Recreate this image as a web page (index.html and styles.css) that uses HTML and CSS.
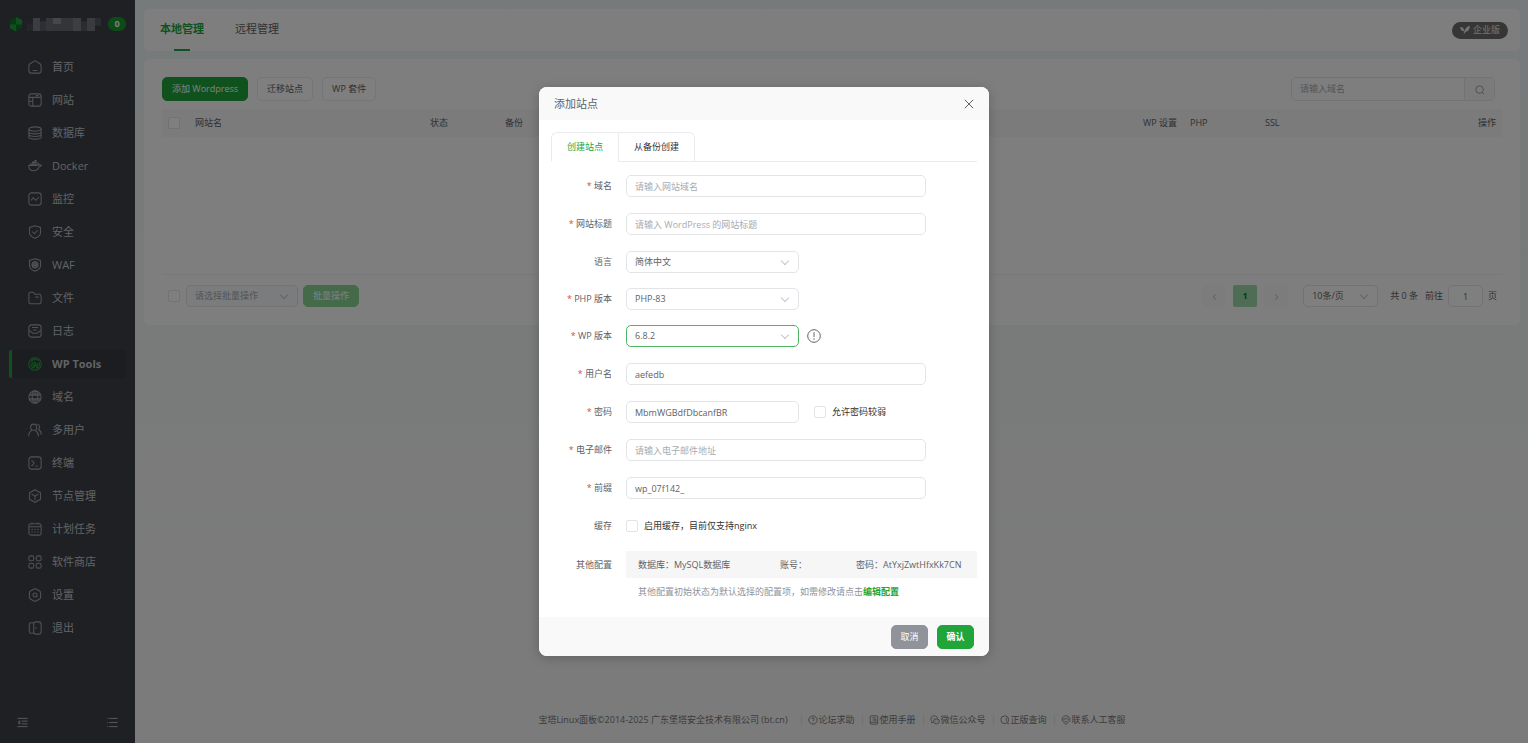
FILE: index.html
```html
<!DOCTYPE html>
<html lang="zh-CN">
<head>
<meta charset="utf-8">
<title>WP Tools</title>
<link rel="stylesheet" href="styles.css">
</head>
<body>
<div class="app">
  <aside class="sidebar">
    <div class="brand">
      <svg class="brand-logo" viewBox="0 0 14 16"><path d="M7 1l6 3v8l-6 3.500L1 12V4z" fill="#12702a"/><path d="M7 1l6 3v4.500H7zM1 8.500h6v7L1 12z" fill="#1fa33a"/></svg>
      <svg class="brand-name" viewBox="0 0 76 12" preserveAspectRatio="none"><path d="M0 5h6v7H0z" fill="#484c55"/><path d="M6 0h7v12H6z" fill="#767a82"/><path d="M13 3h6v9h-6z" fill="#5b5f68"/><path d="M19 0h7v12h-7z" fill="#696d75"/><path d="M26 0h8v6h-8z" fill="#8b8e94"/><path d="M26 6h8v6h-8zM34 0h12v12H34z" fill="#676b73"/><path d="M46 0h8v12h-8z" fill="#797c84"/><path d="M54 3h6v9h-6z" fill="#545861"/><path d="M60 0h8v12h-8z" fill="#73777e"/><path d="M68 0h6v7h-6z" fill="#555962"/></svg>
      <span class="badge">0</span>
    </div>
    <nav class="menu">
      <a href="#" class="item"><svg class="ico" viewBox="0 0 16 16"><path d="M2.300 4.300L7 1.300q1-.6 2 0l4.700 3q1.300.8 1.300 2.200v6q0 2.500-2.500 2.500h-9Q1 15 1 12.500v-6q0-1.400 1.300-2.200zM5.500 12h5"/></svg>首页</a>
      <a href="#" class="item"><svg class="ico" viewBox="0 0 16 16"><rect x="1" y="1" width="14" height="14" rx="2.500"/><path d="M1 5h14M5.500 5v10M5.500 9.500H1M9 3h3"/></svg>网站</a>
      <a href="#" class="item"><svg class="ico" viewBox="0 0 16 16"><ellipse cx="8" cy="3.500" rx="7" ry="2.500"/><path d="M1 3.500v9c0 3.300 14 3.300 14 0v-9M1 6.500c0 3.300 14 3.300 14 0M1 9.500c0 3.300 14 3.300 14 0"/></svg>数据库</a>
      <a href="#" class="item"><svg class="ico" viewBox="0 0 16 16"><path d="M.8 7.500h10.500c.5-1 .3-2 0-2.800 1 .5 1.500 1.300 1.600 2 1-.2 1.800 0 2.500.4-.5 1-1.400 1.400-2.400 1.400-1.200 3.500-3.500 5-6.500 5C2.500 13.500.8 11 .8 7.500z"/><path d="M2 5h2.400v2.500H2zM4.700 5h2.400v2.500H4.700zM7.400 5h2.400v2.500H7.400zM4.700 2.800h2.400v2H4.700zM7.400 1.200h2.400v3.600H7.400z" fill="currentColor" stroke="none"/></svg>Docker</a>
      <a href="#" class="item"><svg class="ico" viewBox="0 0 16 16"><rect x="1" y="1" width="14" height="14" rx="3"/><path d="M3.500 9.500l2.500-3 3 3 3.500-3.500"/></svg>监控</a>
      <a href="#" class="item"><svg class="ico" viewBox="0 0 16 16"><path d="M8 .8l6.300 2v6c0 3.200-3 5-6.300 6.400-3.300-1.400-6.300-3.200-6.300-6.400v-6zM5 7.500L7.500 10 11 6"/></svg>安全</a>
      <a href="#" class="item"><svg class="ico" viewBox="0 0 16 16"><path d="M8 .8l6.300 2v6c0 3.200-3 5-6.300 6.400-3.300-1.400-6.300-3.200-6.300-6.400v-6z"/><circle cx="8" cy="7.800" r="3.500"/><ellipse cx="8" cy="7.800" rx="1.500" ry="3.500"/><path d="M4.500 7h7M4.500 8.700h7"/></svg>WAF</a>
      <a href="#" class="item"><svg class="ico" viewBox="0 0 16 16"><path d="M1 12.500v-9q0-2 2-2h2.500q1 0 1.500.8l1 1.400h5q2 0 2 2v6.800q0 2-2 2H3q-2 0-2-2zM8.500 7H12"/></svg>文件</a>
      <a href="#" class="item"><svg class="ico" viewBox="0 0 16 16"><rect x="1" y="1" width="14" height="14" rx="3"/><path d="M1 7l4.500 3.500h5L15 7M4.500 4h7M6 6.800h4"/></svg>日志</a>
      <a href="#" class="item active"><svg class="ico" viewBox="0 0 16 16"><circle cx="8" cy="8" r="7.200"/><path d="M3.300 5.500A5.300 5.300 0 0 1 12 4.500M2.800 7l2.700 5.800M13 6c.8 2.500-.3 5.500-3 7M4.800 5.500L7 12l1.200-3.800-1-2.700M8 5.500L10 12l1.500-5"/></svg>WP Tools</a>
      <a href="#" class="item"><svg class="ico" viewBox="0 0 16 16"><circle cx="8" cy="8" r="7"/><ellipse cx="8" cy="8" rx="3.200" ry="7"/><path d="M2 4.500h12M2 11.500h12M1 6h14M1 10h14M8 1v5M8 10v5"/></svg>域名</a>
      <a href="#" class="item"><svg class="ico" viewBox="0 0 16 16"><circle cx="6.500" cy="4.800" r="3.500"/><path d="M.8 15c0-3.700 1.700-5.700 4-6.700M12 15c0-3-1-5-3.500-6.500M10.500 1.500c3 .2 3.800 4 1.500 6 2 1.200 3.200 3 3.200 6"/></svg>多用户</a>
      <a href="#" class="item"><svg class="ico" viewBox="0 0 16 16"><rect x="1" y="1" width="14" height="14" rx="3"/><path d="M4 5l3 3-3 3.500M8.500 11.500H11"/></svg>终端</a>
      <a href="#" class="item"><svg class="ico" viewBox="0 0 16 16"><path d="M8 .8l6.300 3.600v7.200L8 15.200l-6.300-3.600V4.400zM4 5.700l4 2.500 4-2.500M8 8.200v4.500"/></svg>节点管理</a>
      <a href="#" class="item"><svg class="ico" viewBox="0 0 16 16"><rect x="1" y="2" width="14" height="13" rx="2.500"/><path d="M1 5.500h14M4.500.7v2M11.500.7v2"/><path d="M4 8.500h1.500M7.300 8.500h1.500M10.500 8.500H12M4 11.500h1.500M7.300 11.500h1.500M10.500 11.500H12"/></svg>计划任务</a>
      <a href="#" class="item"><svg class="ico" viewBox="0 0 16 16"><rect x="1" y="1" width="5.600" height="5.600" rx="2"/><rect x="9.400" y="1" width="5.600" height="5.600" rx="2"/><rect x="1" y="9.400" width="5.600" height="5.600" rx="2"/><rect x="9.400" y="9.400" width="5.600" height="5.600" rx="2"/></svg>软件商店</a>
      <a href="#" class="item"><svg class="ico" viewBox="0 0 16 16"><path d="M6.800 1.200q1.200-.7 2.400 0l4 2.300q1.200.7 1.200 2v5q0 1.300-1.200 2l-4 2.300q-1.200.7-2.400 0l-4-2.300q-1.200-.7-1.200-2v-5q0-1.300 1.200-2z"/><circle cx="8" cy="8" r="2.300"/></svg>设置</a>
      <a href="#" class="item"><svg class="ico" viewBox="0 0 16 16"><path d="M6.500 2.500l1-.9q.6-.6 1.500-.6h3.500Q15 1 15 3.500v9q0 2.500-2.500 2.500H9q-.9 0-1.500-.6l-1-.9M6.500 2H3.500Q1.500 2 1.500 4v8q0 2 2 2h3zM9 7v2"/></svg>退出</a>
    </nav>
    <div class="side-foot">
      <button class="bare" aria-label="收起菜单"><svg class="ico-s" viewBox="0 0 12 12"><path d="M.5 1.500h11M5 4.500h6.500M5 7.500h6.500M.5 10.500h11M3 4.200L1 6l2 1.800z"/></svg></button>
      <button class="bare" aria-label="菜单设置"><svg class="ico-s" viewBox="0 0 12 12"><path d="M.3 1.500h1M2.500 1.500h9M.3 6h1M2.500 6h9M.3 10.500h1M2.500 10.500h9"/></svg></button>
    </div>
  </aside>

  <main class="main">
    <section class="card top">
      <nav class="tabs"><a href="#" class="tab on">本地管理</a><a href="#" class="tab">远程管理</a></nav>
      <button class="edition"><svg viewBox="0 0 12 12"><path d="M4.500 11.500C4.500 6.500 7 2 11.800.8c0 4.700-2 6.700-5 7.200zM.3 2.500c2.500-.3 4.500 1 4.700 5C2.300 7.500.5 6 .3 2.500z" fill="currentColor"/></svg>企业版</button>
    </section>

    <section class="card content">
      <div class="toolbar">
        <button class="btn green">添加 Wordpress</button>
        <button class="btn">迁移站点</button>
        <button class="btn">WP 套件</button>
        <div class="search">
          <input type="text" placeholder="请输入域名" aria-label="请输入域名">
          <button aria-label="搜索"><svg viewBox="0 0 12 12"><circle cx="5.500" cy="5.500" r="4.500"/><path d="M8.700 8.700l2.300 2.300"/></svg></button>
        </div>
      </div>
      <table class="table">
        <colgroup><col class="c-check"><col class="c-name"><col class="c-mid"><col class="c-gap"><col class="c-wp"><col class="c-mid"><col class="c-act"></colgroup>
        <thead><tr>
          <th><input type="checkbox" class="check" aria-label="全选"></th>
          <th>网站名</th><th>状态</th><th>备份</th><th>WP 设置</th><th>PHP</th>
          <th><div class="last"><span>SSL</span><span>操作</span></div></th>
        </tr></thead>
      </table>
      <div class="empty"></div>
      <div class="bottom">
        <input type="checkbox" class="check" aria-label="选择全部">
        <span class="sel batch"><select aria-label="批量操作"><option>请选择批量操作</option></select></span>
        <button class="btn pale">批量操作</button>
        <div class="pager">
          <button class="pg" aria-label="上一页"><svg viewBox="0 0 8 8"><path d="M5.500 1l-3 3 3 3"/></svg></button>
          <button class="pg cur">1</button>
          <button class="pg" aria-label="下一页"><svg viewBox="0 0 8 8"><path d="M2.500 1l3 3-3 3"/></svg></button>
          <span class="sel size"><select aria-label="每页条数"><option>10条/页</option></select></span>
          <span>共 0 条</span>
          <label class="goto">前往 <input type="text" value="1"> 页</label>
        </div>
      </div>
    </section>

    <footer class="footer">
      <span>宝塔Linux面板©2014-2025 广东堡塔安全技术有限公司 (bt.cn)</span>
      <a href="#"><svg viewBox="0 0 12 12"><circle cx="6" cy="6" r="5"/><path d="M4.500 4.800c0-2 3-2 3 0C7.500 6 6 6 6 7.300M6 8.500v.8"/></svg>论坛求助</a>
      <a href="#"><svg viewBox="0 0 12 12"><rect x="1.500" y="1" width="9" height="10" rx="1"/><path d="M4 3.500h4M4 6h1.500M1.500 8.700h9"/><circle cx="7.500" cy="6" r="1"/></svg>使用手册</a>
      <a href="#"><svg viewBox="0 0 12 12"><path d="M4 8.500l-2 1 .3-1.800C-.5 5 1.500 1 5 1c2.500 0 4 1.500 4 3.500"/><ellipse cx="7.800" cy="7.700" rx="3.500" ry="3"/><path d="M3.500 3.800v.8M6 3.800v.5M6.800 7v.8M9 7v.8"/></svg>微信公众号</a>
      <a href="#"><svg viewBox="0 0 12 12"><circle cx="5.700" cy="5.700" r="4.700"/><path d="M7.500 3.500v4M8.500 9l2.500 2"/></svg>正版查询</a>
      <a href="#"><svg viewBox="0 0 12 12"><path d="M1.500 4c1-4 8-4 9 0v3L6 11.300 1.500 7zM3.500 4v2.500M8.500 4v2.500M4.500 8h3M4 4l2 1 2-2"/></svg>联系人工客服</a>
    </footer>
  </main>

  <div class="overlay">
    <form class="modal" role="dialog" aria-labelledby="dlg-title">
      <header class="m-head">
        <h2 id="dlg-title">添加站点</h2>
        <button type="button" class="bare close" aria-label="关闭"><svg viewBox="0 0 10 10"><path d="M.8.800l8.400 8.400M9.200.800L.8 9.200"/></svg></button>
      </header>
      <div class="m-body">
        <div class="m-tabs" role="tablist">
          <button type="button" role="tab" class="m-tab on">创建站点</button>
          <button type="button" role="tab" class="m-tab">从备份创建</button>
        </div>
        <div class="row"><label class="req" for="domain">域名</label><input id="domain" class="input" type="text" placeholder="请输入网站域名"></div>
        <div class="row"><label class="req" for="title">网站标题</label><input id="title" class="input" type="text" placeholder="请输入 WordPress 的网站标题"></div>
        <div class="row tight"><label for="lang">语言</label><span class="sel"><select id="lang"><option>简体中文</option></select></span></div>
        <div class="row tight"><label class="req" for="php">PHP 版本</label><span class="sel"><select id="php"><option>PHP-83</option></select></span></div>
        <div class="row"><label class="req" for="wp">WP 版本</label><span class="sel focus"><select id="wp"><option>6.8.2</option></select></span>
          <svg class="info" viewBox="0 0 14 14"><circle cx="7" cy="7" r="6.300"/><path d="M7 3.200v4.800M7 9.300v1.500"/></svg></div>
        <div class="row"><label class="req" for="user">用户名</label><input id="user" class="input" type="text" value="aefedb"></div>
        <div class="row"><label class="req" for="pass">密码</label><input id="pass" class="input short" type="text" value="MbmWGBdfDbcanfBR"><span class="opt weak"><input type="checkbox" class="check" id="weak"><label for="weak">允许密码较弱</label></span></div>
        <div class="row"><label class="req" for="mail">电子邮件</label><input id="mail" class="input" type="text" placeholder="请输入电子邮件地址"></div>
        <div class="row"><label class="req" for="prefix">前缀</label><input id="prefix" class="input" type="text" value="wp_07f142_"></div>
        <div class="row"><label for="cache">缓存</label><span class="opt"><input type="checkbox" class="check" id="cache"><label for="cache">启用缓存，目前仅支持nginx</label></span></div>
        <div class="row conf"><span class="name">其他配置</span>
          <div class="conf-box"><span>数据库：MySQL数据库</span><span>账号：</span><span>密码：AtYxjZwtHfxKk7CN</span></div></div>
        <p class="hint">其他配置初始状态为默认选择的配置项，如需修改请点击<a href="#">编辑配置</a></p>
      </div>
      <div class="m-foot">
        <button type="button" class="btn gray">取消</button>
        <button type="submit" class="btn green bold">确认</button>
      </div>
    </form>
  </div>
</div>
</body>
</html>
```
FILE: styles.css
```css
* { box-sizing: border-box; }
body {
  margin: 0;
  padding-right: 8px;
  background: #fff;
  color: #606266;
  font: 9px/14px "Open Sans", "Noto Sans CJK SC", sans-serif;
}
button, input, select { font: inherit; color: inherit; margin: 0; }
button { cursor: pointer; padding: 0; }
a { color: inherit; text-decoration: none; }
svg { fill: none; stroke: currentColor; flex: none; }
input::placeholder { color: #a8abb2; opacity: 1; }
.bare { border: 0; background: none; display: flex; }

.app {
  position: relative;
  display: grid;
  grid-template-columns: 135px 1fr;
  min-height: 100vh;
}

/* Sidebar */
.sidebar {
  display: flex;
  flex-direction: column;
  background: #3c4149;
  color: #c4c6c9;
  padding: 15px 9px 15px;
}
.brand { display: flex; align-items: center; height: 18px; }
.brand-logo { width: 14px; height: 16px; stroke: none; }
.brand-name { width: 76px; height: 13px; margin-left: 4px; stroke: none; }
.badge {
  width: 18px;
  margin-left: 5px;
  border-radius: 8px;
  background: #189a2e;
  color: #fff;
  font-weight: 700;
  text-align: center;
}
.menu { display: flex; flex-direction: column; gap: 5px; margin-top: 20px; }
.item {
  display: flex;
  align-items: center;
  gap: 10px;
  height: 28px;
  padding-left: 16px;
  border-left: 3px solid transparent;
  font-size: 11px;
}
.ico { width: 14px; height: 14px; color: #a0a3a8; stroke-width: 1.200; }
.item.active { border-left-color: #20a53a; border-radius: 2px; background: #373b43; font-weight: 700; }
.item.active .ico { color: #20a53a; }
.side-foot { display: flex; justify-content: space-between; margin-top: auto; padding: 0 8px; color: #b9bbbf; }
.ico-s { width: 11px; height: 11px; }

/* Page */
.main {
  display: flex;
  flex-direction: column;
  min-width: 0;
  padding: 9px 8px 16px 9px;
  background: linear-gradient(#eff5f4, #f2f6f5 50%, #f6f6f6 72%);
}
.card { background: #fdfdfd; border-radius: 6px; }
.top {
  display: flex;
  align-items: center;
  justify-content: space-between;
  padding: 0 12px 0 16px;
}
.tabs { display: flex; gap: 31px; font-size: 11px; }
.tab { padding: 13px 0; line-height: 14px; border-bottom: 2px solid transparent; }
.tab.on {
  color: #20a53a;
  font-weight: 700;
  border-image: linear-gradient(90deg, transparent 33%, #20a53a 33% 67%, transparent 67%) 1;
}
.edition {
  display: flex;
  align-items: center;
  gap: 3px;
  height: 17px;
  padding: 0 8px;
  border: 0;
  border-radius: 9px;
  background: #6d6d6d;
  color: #e6e6e6;
}
.edition svg { width: 10px; height: 10px; stroke: none; }
.content { margin-top: 8px; padding: 18px; }
.toolbar { display: flex; align-items: center; gap: 9px; }
.btn {
  height: 24px;
  padding: 0 9px;
  border: 1px solid #e8eaee;
  border-radius: 5px;
  background: #fff;
}
.btn.green { background: #20a53a; border-color: #20a53a; color: #fff; }
.btn.gray { background: #909399; border-color: #909399; color: #fff; }
.btn.pale { height: 22px; background: #88d495; border-color: #88d495; color: #fff; }
.bold { font-weight: 700; }
.search {
  display: flex;
  width: 204px;
  height: 24px;
  margin-left: auto;
  margin-right: 7px;
  border: 1px solid #e4e6ea;
  border-radius: 5px;
  overflow: hidden;
}
.search input { flex: 1; min-width: 0; border: 0; background: none; padding: 0 8px; }
.search button { width: 30px; border: 0; border-left: 1px solid #e4e6ea; background: #f7f7f8; color: #909399; }
.search svg { width: 10px; height: 10px; vertical-align: middle; }

.table { width: 100%; margin-top: 8px; border-collapse: collapse; table-layout: fixed; background: #f6f6f7; }
.table th { height: 28px; padding: 0 8px; text-align: left; font-weight: 400; white-space: nowrap; }
.table th:first-child { padding: 0 0 0 6px; }
.c-check { width: 25px; }
.c-name { width: 235px; }
.c-mid { width: 75px; }
.c-wp { width: 47px; }
.c-act { width: 245px; }
.last { display: flex; justify-content: space-between; margin-right: -2px; }
.check {
  appearance: none;
  display: block;
  flex: none;
  width: 12px;
  height: 12px;
  border: 1px solid #e2e4e8;
  border-radius: 2px;
  background: #fff;
}
.empty { height: 138px; border-bottom: 1px solid #f0f1f4; }
.bottom { display: flex; align-items: center; padding: 10px 0 0 6px; }
.batch { margin: 0 5px 0 6px; }
.sel { display: flex; position: relative; width: 173px; height: 22px; }
.sel select {
  appearance: none;
  width: 100%;
  padding: 0 8px;
  border: 1px solid #e2e4e8;
  border-radius: 5px;
  background: #fff;
}
.sel::after {
  content: "";
  position: absolute;
  right: 11px;
  top: 7px;
  width: 5px;
  height: 5px;
  border: solid #c4c7cc;
  border-width: 0 1px 1px 0;
  transform: rotate(45deg);
}
.sel.batch { width: 112px; }
.sel.batch select { background: #f7f8fa; color: #a8abb2; }
.sel.size { width: 75px; margin: 0 12px 0 8px; }
.sel.focus select { border-color: #4fb565; }
.pager { display: flex; align-items: center; margin-left: auto; margin-right: 5px; }
.pg { width: 24px; height: 22px; margin-right: 7px; border: 0; border-radius: 2px; background: #f8f9fa; color: #a8abb2; }
.pg svg { width: 7px; height: 8px; vertical-align: middle; }
.pg.cur { background: #9edba9; color: #14702a; font-weight: 700; }
.goto { display: flex; align-items: center; gap: 5px; margin-left: 7px; }
.goto input { width: 35px; height: 22px; border: 1px solid #e2e4e8; border-radius: 5px; background: #fff; text-align: center; }

.footer { display: flex; justify-content: center; align-items: center; margin-top: auto; color: #777; }
.footer a { display: flex; align-items: center; gap: 1px; margin-left: 7px; padding-left: 6px; border-left: 1px solid #e4e4e4; line-height: 10px; }
.footer span { margin-right: 6px; }
.footer svg { width: 10px; height: 10px; }

/* Dialog */
.overlay {
  position: absolute;
  inset: 0;
  display: flex;
  align-items: center;
  justify-content: center;
  background: rgba(0, 0, 0, .5);
}
.modal {
  width: 450px;
  border-radius: 8px;
  background: #fff;
  overflow: hidden;
  box-shadow: 0 2px 12px rgba(0, 0, 0, .2);
}
.m-head {
  display: flex;
  align-items: center;
  justify-content: space-between;
  height: 33px;
  padding: 0 15px;
  background: #f9f9f9;
}
.m-head h2 { margin: 0; font-size: 11px; font-weight: 400; }
.close svg { width: 10px; height: 10px; }
.m-body { padding: 12px 12px 18px; }
.m-tabs { display: flex; margin-bottom: 13px; border-bottom: 1px solid #e9ebef; }
.m-tab {
  height: 30px;
  margin-bottom: -1px;
  padding: 0 15px;
  border: 1px solid #e9ebef;
  background: #fff;
  color: #303133;
}
.m-tab.on { border-bottom-color: #fff; border-right: 0; border-radius: 6px 0 0 0; color: #20a53a; }
.m-tab:last-child { border-radius: 0 6px 0 0; }
.row { display: flex; align-items: center; height: 22px; margin-bottom: 16px; }
.row.tight { margin-bottom: 15px; }
.row > label, .name { flex: none; width: 61px; margin-right: 14px; text-align: right; }
.req::before { content: "* "; color: #e04848; }
.input {
  width: 300px;
  height: 22px;
  padding: 0 8px;
  border: 1px solid #e2e4e8;
  border-radius: 5px;
  background: #fff;
}
.input.short { width: 173px; }
.info { width: 14px; height: 14px; margin-left: 8px; }
.opt { display: flex; align-items: center; gap: 6px; color: #303133; }
.weak { margin-left: 15px; }
.conf { height: 27px; margin: -2px 0 7px; }
.conf-box {
  display: grid;
  grid-template-columns: 142px 76px auto;
  flex: 1;
  padding: 7px 0 6px 12px;
  background: #f6f6f7;
  white-space: nowrap;
}
.hint { margin: 0 0 0 87px; color: #909399; }
.hint a { color: #20a53a; font-weight: 700; }
.m-foot {
  display: flex;
  justify-content: flex-end;
  align-items: center;
  gap: 9px;
  height: 39px;
  padding: 0 15px;
  background: #f9f9f9;
}
.m-foot .btn { width: 37px; padding: 0; }
```
